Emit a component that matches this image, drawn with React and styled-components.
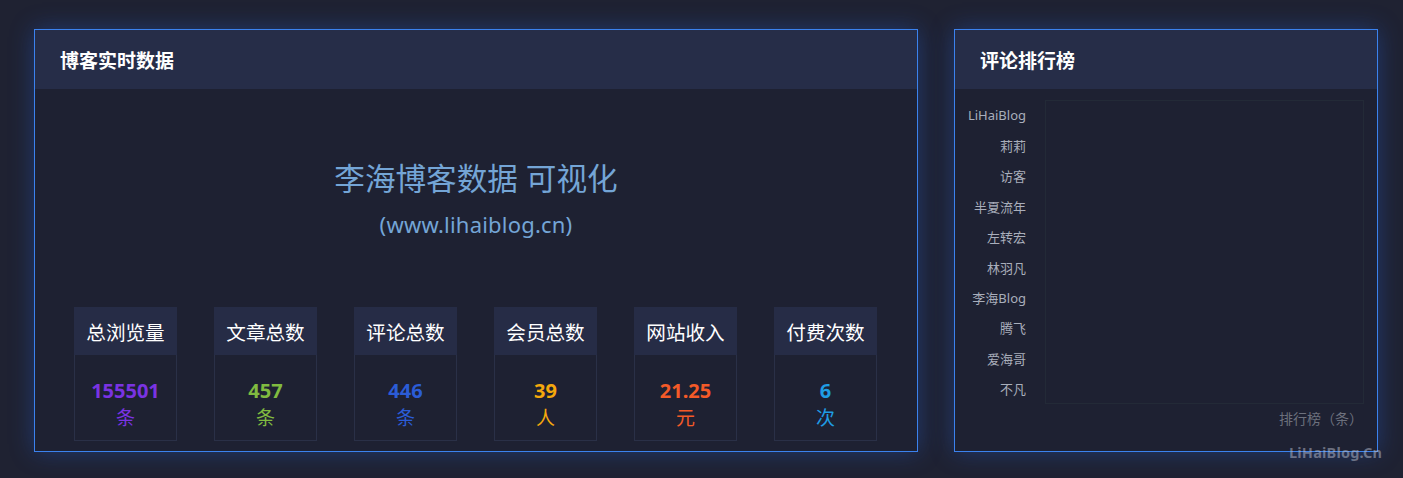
import React from "react";
import styled, { createGlobalStyle } from "styled-components";

const GlobalStyle = createGlobalStyle`
  html, body {
    margin: 0;
    padding: 0;
    background: #1f2232;
  }
  body {
    font-family: "Noto Sans", "Noto Sans CJK SC", sans-serif;
    min-height: 100vh;
  }
`;

const stats = [
  { label: "总浏览量", value: "155501", unit: "条", color: "#7a33e2" },
  { label: "文章总数", value: "457", unit: "条", color: "#80bb40" },
  { label: "评论总数", value: "446", unit: "条", color: "#2b5cd6" },
  { label: "会员总数", value: "39", unit: "人", color: "#f5a80c" },
  { label: "网站收入", value: "21.25", unit: "元", color: "#f45a28" },
  { label: "付费次数", value: "6", unit: "次", color: "#1f9de4" },
];

const ranking = [
  "LiHaiBlog",
  "莉莉",
  "访客",
  "半夏流年",
  "左转宏",
  "林羽凡",
  "李海Blog",
  "腾飞",
  "爱海哥",
  "不凡",
];

const App = () => {
  return (
    <Page>
      <GlobalStyle />
      <Panel $width={884}>
        <PanelHead>博客实时数据</PanelHead>
        <DataBody>
          <BigTitle>李海博客数据 可视化</BigTitle>
          <SubTitle>(www.lihaiblog.cn)</SubTitle>
          <Cards>
            {stats.map((s) => (
              <Card key={s.label}>
                <CardHead>{s.label}</CardHead>
                <CardBody $color={s.color}>
                  <Num>{s.value}</Num>
                  <Unit>{s.unit}</Unit>
                </CardBody>
              </Card>
            ))}
          </Cards>
        </DataBody>
      </Panel>
      <Panel $width={424}>
        <PanelHead>评论排行榜</PanelHead>
        <RankBody>
          <Chart>
            <Labels>
              {ranking.map((name) => (
                <li key={name}>{name}</li>
              ))}
            </Labels>
            <Grid />
          </Chart>
          <Axis>排行榜（条）</Axis>
        </RankBody>
      </Panel>
      <Mark>LiHaiBlog.Cn</Mark>
    </Page>
  );
};

const Page = styled("div")`
  position: relative;
  display: flex;
  gap: 36px;
  padding: 29px 0 0 34px;
  height: 449px;
`;

const Panel = styled("section")`
  width: ${(p) => p.$width}px;
  height: 423px;
  box-sizing: border-box;
  border: 1px solid #3b82ee;
  background: #1e2132;
  box-shadow: 0 0 22px rgba(36, 86, 190, 0.45);
  display: flex;
  flex-direction: column;
`;

const PanelHead = styled("h3")`
  margin: 0;
  height: 59px;
  flex-shrink: 0;
  display: flex;
  align-items: center;
  padding-left: 25px;
  background: #262d48;
  color: #ffffff;
  font-size: 19px;
  font-weight: 700;
`;

const DataBody = styled("div")`
  display: flex;
  flex-direction: column;
  align-items: center;
  padding-top: 69px;
`;

const BigTitle = styled("h1")`
  margin: 0;
  font-size: 30.6px;
  line-height: 40px;
  font-weight: 400;
  color: #74a5d6;
`;

const SubTitle = styled("p")`
  margin: 11px 0 0;
  font-size: 22px;
  line-height: 30px;
  letter-spacing: 0.2px;
  color: #74a5d6;
`;

const Cards = styled("div")`
  align-self: flex-start;
  display: flex;
  gap: 37px;
  margin: 68px 0 0 39px;
`;

const Card = styled("div")`
  width: 103px;
  display: flex;
  flex-direction: column;
`;

const CardHead = styled("div")`
  height: 48px;
  display: flex;
  align-items: center;
  justify-content: center;
  background: #262c46;
  color: #ffffff;
  font-size: 19.6px;
`;

const CardBody = styled("div")`
  height: 86px;
  box-sizing: border-box;
  border: 1px solid #2a3047;
  border-top: none;
  display: flex;
  flex-direction: column;
  align-items: center;
  padding-top: 22px;
  color: ${(p) => p.$color};
`;

const Num = styled("span")`
  font-size: 20px;
  font-weight: 700;
  line-height: 28px;
`;

const Unit = styled("span")`
  font-size: 19px;
  line-height: 26px;
`;

const RankBody = styled("div")`
  display: flex;
  flex-direction: column;
  padding: 11px 13px 0 0;
`;

const Chart = styled("div")`
  display: flex;
  gap: 19px;
  height: 304px;
`;

const Labels = styled("ul")`
  margin: 0;
  padding: 0;
  list-style: none;
  width: 71px;
  display: grid;
  grid-template-rows: repeat(10, 1fr);
  & li {
    display: flex;
    align-items: center;
    justify-content: flex-end;
    color: #a9aebb;
    font-size: 13px;
  }
`;

const Grid = styled("div")`
  flex: 1;
  box-sizing: border-box;
  border: 1px solid #232a37;
`;

const Axis = styled("div")`
  align-self: flex-end;
  margin: 5px 1px 0 0;
  font-size: 14px;
  line-height: 20px;
  color: #6c707d;
`;

const Mark = styled("div")`
  position: absolute;
  left: 1289px;
  top: 442px;
  font-size: 14.5px;
  font-weight: 700;
  letter-spacing: 0.2px;
  color: rgba(185, 190, 205, 0.5);
`;

export default App;
